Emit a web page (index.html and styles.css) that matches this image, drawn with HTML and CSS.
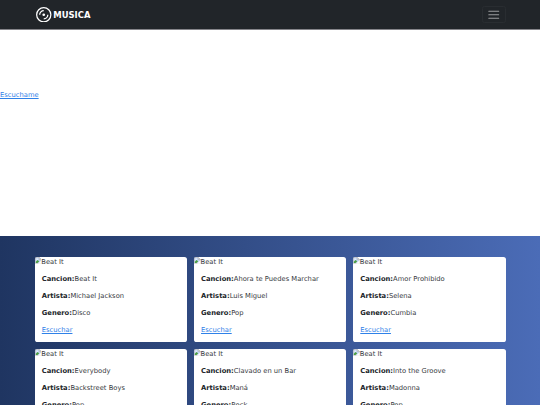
FILE: index.html
```
<!DOCTYPE html>
<html lang="es">
    <head>
        <meta charset="UTF-8">
        <title>Musica</title>
        <link rel="stylesheet" href="styles.css">
    </head>
    <body>
        <nav class="navbar">
            <div class="container">
                <a class="brand" href="#">
                    <svg class="logo" viewBox="0 0 24 24" fill="none" stroke="#fff">
                        <circle cx="12" cy="12" r="11" stroke-width="1.9"/>
                        <circle cx="12" cy="12" r="2.1" fill="#fff" stroke="none"/>
                        <path d="M5.700 12A6.300 6.300 0 0 1 12 5.700M18.300 12A6.300 6.300 0 0 1 12 18.300" stroke-width="2"/>
                    </svg>
                    <span>MUSICA</span>
                </a>
                <button class="toggler" type="button" aria-label="Menu">
                    <svg viewBox="0 0 30 30" stroke="rgba(255,255,255,.55)" stroke-width="2.3" stroke-linecap="round">
                        <path d="M4 7h22M4 15h22M4 23h22"/>
                    </svg>
                </button>
            </div>
        </nav>
        <header class="hero">
            <a href="#">Escuchame</a>
        </header>
        <main class="songs">
            <div class="container grid" id="list"></div>
        </main>

        <script>
            let songs = [
                ["Beat It", "Michael Jackson", "Disco"],
                ["Ahora te Puedes Marchar", "Luis Miguel", "Pop"],
                ["Amor Prohibido", "Selena", "Cumbia"],
                ["Everybody", "Backstreet Boys", "Pop"],
                ["Clavado en un Bar", "Maná", "Rock"],
                ["Into the Groove", "Madonna", "Pop"]
            ];

            document.getElementById("list").innerHTML = songs.map(([cancion, artista, genero]) => `
                <div class="card">
                    <div class="cover">
                        <svg viewBox="0 0 16 16">
                            <path d="M1 1h9l5 5v9H1z" fill="#c5d8f5" stroke="#999"/>
                            <path d="M2 14v-3l4-4 4 3-4 4z" fill="#4b9e3f"/>
                            <path d="M3 6q1-3 3-2t2 2z" fill="#fff"/>
                            <path d="M16 7L7 16h9z" fill="#fff"/>
                            <path d="M10 1v5h5z" fill="#eee" stroke="#999"/>
                        </svg><span>Beat It</span>
                    </div>
                    <div class="card-body">
                        <p><b>Cancion:</b>${cancion}</p>
                        <p><b>Artista:</b>${artista}</p>
                        <p><b>Genero:</b>${genero}</p>
                        <a href="#">Escuchar</a>
                    </div>
                </div>`).join("");
        </script>
    </body>
</html>
```

FILE: styles.css
```
*{box-sizing: border-box;}
html{font-size: 6.75px;}
body{
    margin: 0;
    height: 100vh;
    overflow: hidden;
    font-family: "DejaVu Sans",sans-serif;
    font-size: 1rem;
    line-height: 1.5;
    color: #373a3e;
    background: #fff;
}
p{margin: 0 0 1rem;}
b{color: #212529;}
a{color: #2f81e8;}

.container{
    width: 471px;
    margin: 0 auto;
}
.navbar{
    height: 29.5px;
    background: #212529;
    border-bottom: 1px solid #85858a;
}
.navbar .container{
    display: flex;
    align-items: center;
    justify-content: space-between;
    height: 29px;
}
.brand{
    display: flex;
    align-items: center;
    gap: 1.8px;
    padding-left: 1.5px;
    color: #fff;
    font-size: 8.44px;
    font-weight: bold;
    text-decoration: none;
}
.brand span{padding-top: 1px;}
.logo{
    width: 15.5px;
    height: 15.5px;
}
.toggler{
    display: flex;
    align-items: center;
    justify-content: center;
    width: 24px;
    height: 17px;
    padding: 0;
    background: none;
    border: 1px solid #292d31;
    border-radius: 2.5px;
}
.toggler svg{
    flex-shrink: 0;
    width: 13.5px;
    height: 13.5px;
}
.hero{
    height: 206.75px;
    padding-top: 60px;
}
.songs{
    height: 168.75px;
    overflow: hidden;
    padding-top: 20.4px;
    background: linear-gradient(to right, #1f3561, #4b6cb7);
}
.grid{
    display: grid;
    grid-template-columns: repeat(3, 1fr);
    gap: 6.75px;
}
.card{
    height: 85.3px;
    background: #fff;
    border-radius: 2.6px;
}
.cover{
    display: flex;
    height: 1.5rem;
    margin-top: 0;
}
.cover svg{
    width: 1rem;
    height: 1rem;
    margin-top: .1rem;
}
.card-body{padding: 1.06rem 1.08rem;}
```
